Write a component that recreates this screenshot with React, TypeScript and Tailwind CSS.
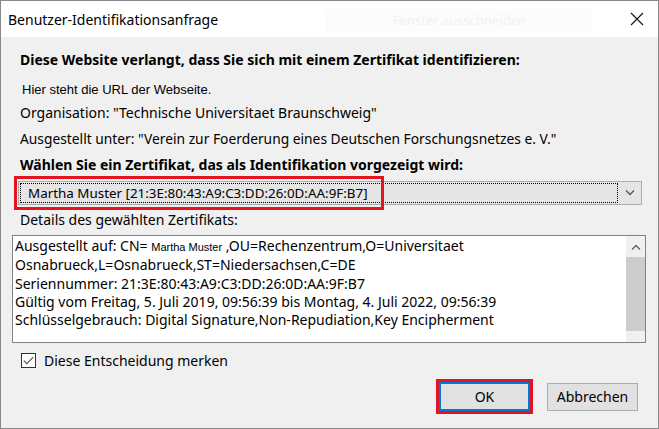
import React from "react";

const ui = { fontFamily: '"Noto Sans", "Open Sans", sans-serif' };
const arial = { fontFamily: '"Liberation Sans", Arial, sans-serif' };

function CloseIcon() {
  return (
    <svg width="14" height="14" viewBox="0 0 14 14" fill="none" stroke="#111" strokeWidth="1.1">
      <path d="M1 1 L13 13 M13 1 L1 13" />
    </svg>
  );
}

function Chevron({ up = false, color = "#555" }: { up?: boolean; color?: string }) {
  return (
    <svg width="10" height="6" viewBox="0 0 10 6" fill="none" stroke={color} strokeWidth="1.3">
      {up ? <path d="M1 5.5 L5 1.5 L9 5.5" /> : <path d="M1 0.5 L5 4.5 L9 0.5" />}
    </svg>
  );
}

export default function App() {
  const lines = [
    <>
      Ausgestellt auf: CN= <span className="text-[11px]" style={arial}>Martha Muster</span> ,OU=Rechenzentrum,O=Universitaet
    </>,
    <>Osnabrueck,L=Osnabrueck,ST=Niedersachsen,C=DE</>,
    <>Seriennummer: 21:3E:80:43:A9:C3:DD:26:0D:AA:9F:B7</>,
    <>Gültig vom Freitag, 5. Juli 2019, 09:56:39 bis Montag, 4. Juli 2022, 09:56:39</>,
    <>Schlüsselgebrauch: Digital Signature,Non-Repudiation,Key Encipherment</>,
  ];

  return (
    <div
      className="w-[659px] h-[429px] flex flex-col bg-[#f0f0f0] border border-[#888] text-black overflow-hidden"
      style={ui}
    >
      {/* title bar */}
      <div className="relative h-[36px] bg-white flex items-center pl-[7px] pr-[14px] shrink-0">
        <span className="text-[14px] flex-1">Benutzer-Identifikationsanfrage</span>
        <div className="absolute left-[325px] top-[8px] w-[267px] h-[24px] bg-[#fcfcfc] flex items-center justify-center text-[13px] text-[#f2f2f2]">
          Fenster ausschneiden
        </div>
        <CloseIcon />
      </div>

      {/* body */}
      <div className="flex flex-col pl-[11px] pr-[12px]">
        <div className="mt-[13px] h-[20px] leading-[20px] pl-[8px] text-[14px] font-bold">
          Diese Website verlangt, dass Sie sich mit einem Zertifikat identifizieren:
        </div>
        <div className="mt-[10px] h-[20px] leading-[20px] pl-[10px] text-[13px]" style={arial}>
          Hier steht die URL der Webseite.
        </div>
        <div className="mt-[3px] h-[20px] leading-[20px] pl-[8px] text-[14px]">
          Organisation: "Technische Universitaet Braunschweig"
        </div>
        <div className="mt-[6px] h-[20px] leading-[20px] pl-[8px] text-[13.8px]">
          Ausgestellt unter: "Verein zur Foerderung eines Deutschen Forschungsnetzes e. V."
        </div>
        <div className="mt-[6px] h-[20px] leading-[20px] pl-[8px] text-[14px] font-bold">
          Wählen Sie ein Zertifikat, das als Identifikation vorgezeigt wird:
        </div>

        {/* combo box */}
        <div className="mt-[6px] ml-[6px] mr-[4px] relative h-[24px] border border-[#adadad] bg-[#e5e5e5] flex">
          <div className="flex-1 m-[1px] border border-dotted border-black flex items-center pl-[7px] text-[13.4px]">
            Martha Muster [21:3E:80:43:A9:C3:DD:26:0D:AA:9F:B7]
          </div>
          <div className="w-[22px] flex items-center justify-center">
            <Chevron />
          </div>
          <div className="absolute left-[-5px] top-[-6px] w-[370px] h-[34px] border-[3px] border-[#e3141f]" />
        </div>

        <div className="mt-[5px] h-[20px] leading-[20px] pl-[8px] text-[14px]">
          Details des gewählten Zertifikats:
        </div>

        {/* details list */}
        <div className="mt-[5px] h-[108px] border border-[#828282] bg-white flex">
          <div className="flex-1 pt-[1px] pl-[2px] text-[14px] leading-[18.3px] whitespace-nowrap overflow-hidden">
            {lines.map((l, i) => (
              <div key={i}>{l}</div>
            ))}
          </div>
          <div className="w-[19px] bg-[#f0f0f0] flex flex-col">
            <div className="h-[21px] flex items-center justify-center">
              <Chevron up color="#606060" />
            </div>
            <div className="h-[74px] bg-[#cdcdcd]" />
          </div>
        </div>

        {/* checkbox */}
        <div className="mt-[9px] ml-[9px] flex items-center gap-[8px] h-[16px]">
          <div className="w-[15px] h-[15px] border border-[#333] bg-white flex items-center justify-center">
            <svg width="11" height="9" viewBox="0 0 11 9" fill="none" stroke="#555" strokeWidth="1.1">
              <path d="M0.8 4.6 L3.8 7.6 L10.2 1.2" />
            </svg>
          </div>
          <span className="text-[14px]">Diese Entscheidung merken</span>
        </div>

        {/* buttons */}
        <div className="mt-[11px] flex justify-end items-center pr-[8px]">
          <div className="border-[3px] border-[#e3141f]">
            <button className="w-[91px] h-[29px] bg-[#e1e1e1] border-2 border-[#0078d7] text-[14px]">
              OK
            </button>
          </div>
          <button className="ml-[14px] w-[91px] h-[28px] bg-[#e1e1e1] border border-[#adadad] text-[14px]">
            Abbrechen
          </button>
        </div>
      </div>
    </div>
  );
}
